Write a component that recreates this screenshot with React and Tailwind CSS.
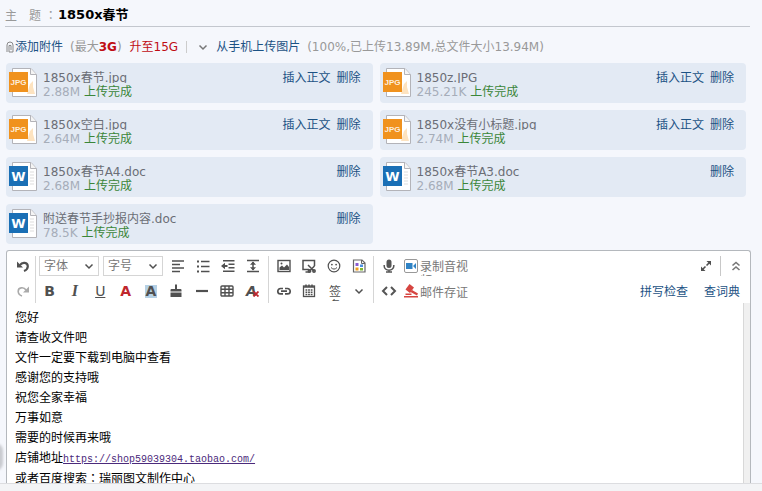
import React from 'react'

const files = [
  { id: 1, name: '1850x春节.jpg', size: '2.88M', type: 'jpg' },
  { id: 2, name: '1850z.JPG', size: '245.21K', type: 'jpg' },
  { id: 3, name: '1850x空白.jpg', size: '2.64M', type: 'jpg' },
  { id: 4, name: '1850x没有小标题.jpg', size: '2.74M', type: 'jpg' },
  { id: 5, name: '1850x春节A4.doc', size: '2.68M', type: 'doc' },
  { id: 6, name: '1850x春节A3.doc', size: '2.68M', type: 'doc' },
  { id: 7, name: '附送春节手抄报内容.doc', size: '78.5K', type: 'doc' },
]

const lines = [
  '您好',
  '请查收文件吧',
  '文件一定要下载到电脑中查看',
  '感谢您的支持哦',
  '祝您全家幸福',
  '万事如意',
  '需要的时候再来哦',
]

const icons = {
  undo: (
    <g>
      <path d="M5 7C7 3.800 13 4 12.800 8.500c-.1 2.300-1.800 3.800-3.800 4.500" fill="none" stroke="currentColor" strokeWidth="2.200" />
      <path d="M2 3.500v6h6z" fill="currentColor" />
    </g>
  ),
  redo: (
    <g>
      <path d="M11 7C9 3.800 3 4 3.200 8.500c.1 2.300 1.800 3.800 3.800 4.500" fill="none" stroke="#aaa" strokeWidth="1.600" />
      <path d="M14 3.500v6H8z" fill="#aaa" />
    </g>
  ),
  align: <path d="M2 3h12M2 6.5h8M2 10h12M2 13.5h8" stroke="currentColor" strokeWidth="1.6" />,
  list: (
    <g>
      <path d="M6 3.5h8.5M6 8.5h8.5M6 13.5h8.5" stroke="currentColor" strokeWidth="1.3" />
      <path d="M2 3.5h2M2 8.5h2M2 13.5h2" stroke="currentColor" strokeWidth="2" />
    </g>
  ),
  indent: (
    <g>
      <path d="M3 2.7h11.5M8.5 6.2h6M8.5 9.7h6M3 13.3h11.5" stroke="currentColor" strokeWidth="1.5" />
      <path d="M1 8l4-3.2V7h2.5v2H5v2.200z" fill="currentColor" />
    </g>
  ),
  lineHeight: (
    <g>
      <path d="M2 2.500h12M2 13.500h12M8 4v8" stroke="currentColor" strokeWidth="1.5" />
      <path d="M8 3.500l3 3.200H5zM8 12.500l3-3.200H5z" fill="currentColor" />
    </g>
  ),
  image: (
    <g>
      <rect x="2" y="2.500" width="12" height="11" fill="none" stroke="currentColor" strokeWidth="1.400" />
      <path d="M3.500 12V9.500l2.500-2 2 2L11 6.500l2 2.500v3z" fill="currentColor" />
      <circle cx="5.500" cy="5.500" r="1" fill="currentColor" />
    </g>
  ),
  capture: (
    <g fill="none" stroke="currentColor" strokeWidth="1.500">
      <path d="M8 11.500H2v-9h11.500V8" />
      <path d="M4.500 14h4M7 7l6.500 6.500M13.500 8L8 13.500" />
      <circle cx="8.500" cy="13" r="1.200" />
      <circle cx="13" cy="13" r="1.200" />
    </g>
  ),
  smile: (
    <g>
      <circle cx="8" cy="8" r="5.800" fill="none" stroke="currentColor" strokeWidth="1.200" />
      <circle cx="5.900" cy="6.600" r=".9" fill="currentColor" />
      <circle cx="10.100" cy="6.600" r=".9" fill="currentColor" />
      <path d="M5 9.500q3 3.200 6 0" fill="none" stroke="currentColor" />
    </g>
  ),
  paper: (
    <g>
      <path d="M2.500 2h8.500l3 3v9H2.500z" fill="#fff" stroke="#666" strokeWidth="1.200" />
      <path d="M10.500 2v3.500H14" fill="none" stroke="#666" />
      <path d="M4.500 5h3v3h-3z" fill="#8a5bd0" />
      <path d="M9 6.500h3V9H9z" fill="#4a90e2" />
      <path d="M4.500 9.500h3v3h-3z" fill="#f0a020" />
      <path d="M9 10h3v2.500H9z" fill="#7cb82f" />
    </g>
  ),
  mic: (
    <g>
      <rect x="5.500" y="1.500" width="5" height="8.500" rx="2.500" fill="#555" />
      <path d="M3.200 7v1a4.800 4.200 0 0 0 9.600 0V7M8 12v2M5 14h6" fill="none" stroke="#555" strokeWidth="1.500" />
    </g>
  ),
  brush: (
    <g fill="currentColor">
      <path d="M7 1.500h2V6h3.500q1 0 1 1v1.500h-11V7q0-1 1-1H7z" />
      <path d="M2.500 9.500h11V14h-11z" />
    </g>
  ),
  dash: <path d="M2 8h12" stroke="currentColor" strokeWidth="2.200" />,
  table: (
    <g fill="none" stroke="currentColor" strokeWidth="1.400">
      <rect x="2" y="3" width="12" height="10" rx="1" />
      <path d="M2 6.300h12M2 9.700h12M6 3v10M10 3v10" />
    </g>
  ),
  link: (
    <g fill="none" stroke="currentColor" strokeWidth="1.700">
      <path d="M7 5.500H4.500a2.700 2.700 0 0 0 0 5.400H7M9 5.500h2.500a2.700 2.700 0 0 1 0 5.400H9M5 8.200h6" />
    </g>
  ),
  calendar: (
    <g>
      <rect x="2.500" y="3" width="11" height="10.500" fill="none" stroke="currentColor" strokeWidth="1.300" />
      <path d="M2.500 4h11M5 1.500v2M8 1.500v2M11 1.500v2" stroke="currentColor" strokeWidth="1.500" />
      <path d="M4.500 7h7M4.500 9.300h7M4.500 11.600h7" stroke="currentColor" strokeWidth="1.500" strokeDasharray="1.800 .8" />
    </g>
  ),
  down: <path d="M4.500 6.500L8 10l3.500-3.500" fill="none" stroke="currentColor" strokeWidth="1.500" />,
  code: <path d="M6 4L2 8l4 4M10 4l4 4-4 4" fill="none" stroke="#555" strokeWidth="2" />,
  video: (
    <g>
      <rect x="1.500" y="1.500" width="13" height="13" rx="1.500" fill="#fff" stroke="#999" />
      <path d="M3 5h6.500v6H3zM10 8l3-3v6z" fill="#2f83c5" />
    </g>
  ),
  gavel: (
    <g fill="#d64541">
      <path d="M6.500 1L11 4.500 7 10 2.500 6.500z" />
      <path d="M9 7l6 3.500-1 2L7.500 9z" />
      <path d="M2.500 10.500h6V12h-6zM1 13h14v1.500H1z" />
    </g>
  ),
  expand: (
    <g fill="currentColor">
      <path d="M8.500 3H13v4.500zM7.500 13H3V8.500z" />
      <path d="M5 11l6-6" stroke="currentColor" strokeWidth="1.600" strokeDasharray="3.500 1.500" />
    </g>
  ),
  collapse: <path d="M4.500 7.500L8 4.500l3.500 3M4.500 12L8 9l3.500 3" fill="none" stroke="#777" strokeWidth="1.600" />,
}

const Icon = ({ name }) => (
  <svg viewBox="0 0 16 16" className="w-4 h-4 shrink-0">{icons[name]}</svg>
)

const Tool = ({ label, icon, children }) => (
  <button type="button" aria-label={label} className="w-[25px] h-5 shrink-0 flex items-center justify-center">
    {icon ? <Icon name={icon} /> : children}
  </button>
)

const FileIcon = ({ type }) => (
  <svg viewBox="0 0 30 32" className="w-[30px] h-8 shrink-0">
    <path d="M4.500 1.500H23l5.500 6v22h-24z" fill="#fff" stroke="#b3b3b8" />
    <path d="M22.500 1.500v6h6" fill="#f4f4f4" stroke="#b3b3b8" />
    {type === 'jpg' ? (
      <path d="M22 17l3-3v6l2 7h-8z" fill="#fde3c0" />
    ) : (
      <path d="M22 11h4M22 14h4M22 17h4M22 20h4M22 23h4" stroke="#ddd" />
    )}
    <rect x="1" y="5" width="19" height="20" fill={type === 'jpg' ? '#f0921e' : '#1a6fb5'} />
    {type === 'jpg' ? (
      <text x="10.500" y="18" textAnchor="middle" fontSize="8" fontWeight="bold" fill="#fdeedd" fontFamily="Liberation Sans, sans-serif">JPG</text>
    ) : (
      <text x="10.500" y="20" textAnchor="middle" fontSize="13" fontWeight="bold" fill="#fff" fontFamily="DejaVu Sans, sans-serif">W</text>
    )}
  </svg>
)

const Attachment = ({ file }) => (
  <li className="flex h-10 pl-0.5 pr-3 pt-1 bg-[#e3eaf4] rounded-sm">
    <FileIcon type={file.type} />
    <div className="flex-1 min-w-0 pl-[5px] pt-[3px]">
      <p className="h-[13px] mb-px leading-4 overflow-hidden whitespace-nowrap text-[#6b6e76]">{file.name}</p>
      <p className="leading-4 whitespace-nowrap text-[#a6adb9]">
        {file.size} <span className="text-[#3b8639]">上传完成</span>
      </p>
    </div>
    <div className="flex gap-1.5 leading-[22px]">
      {file.type === 'jpg' && <a href="#insert">插入正文</a>}
      <a href="#delete">删除</a>
    </div>
  </li>
)

const FontSelect = ({ label }) => (
  <div className="relative w-[60px] h-5 shrink-0">
    <select aria-label={label} className="appearance-none w-full h-full pl-1 border border-[#d5d5d5] bg-white text-[#777]">
      <option>{label}</option>
    </select>
    <span className="absolute right-0.5 top-0.5 pointer-events-none"><Icon name="down" /></span>
  </div>
)

const Colon = () => <span className="font-['Noto_Sans_CJK_TC',sans-serif]">：</span>

const Toolbar = () => (
  <div className="flex pt-[5px] text-[#505050] shrink-0">
    <div className="flex flex-col gap-[5px] pl-[3px] border-r border-[#d5d5d5]">
      <Tool label="撤销" icon="undo" />
      <Tool label="重做" icon="redo" />
    </div>
    <div className="flex flex-col gap-[5px] pl-[3px] pr-[3px] border-r border-[#d5d5d5]">
      <div className="flex">
        <div className="flex gap-1 pr-0.5">
          <FontSelect label="字体" />
          <FontSelect label="字号" />
        </div>
        <Tool label="对齐" icon="align" />
        <Tool label="列表" icon="list" />
        <Tool label="缩进" icon="indent" />
        <Tool label="行距" icon="lineHeight" />
      </div>
      <div className="flex justify-between -ml-0.5 text-sm leading-5">
        <Tool label="加粗"><b>B</b></Tool>
        <Tool label="斜体"><b className="italic text-base font-['Liberation_Serif',serif]">I</b></Tool>
        <Tool label="下划线"><span className="underline">U</span></Tool>
        <Tool label="文字颜色"><b className="text-[#c0272d]">A</b></Tool>
        <Tool label="背景颜色"><b className="leading-[13px] px-px bg-[#b5d0e4]">A</b></Tool>
        <Tool label="格式刷" icon="brush" />
        <Tool label="分隔线" icon="dash" />
        <Tool label="表格" icon="table" />
        <Tool label="清除格式">
          <b className="italic">A</b>
          <svg viewBox="0 0 6 6" className="w-1.5 h-1.5 self-end mb-1 -ml-1"><path d="M.5.5l5 5M5.500.5l-5 5" stroke="#c0272d" strokeWidth="1.800" /></svg>
        </Tool>
      </div>
    </div>
    <div className="flex flex-col gap-[5px] pl-0.5 pr-0.5 border-r border-[#d5d5d5]">
      <div className="flex">
        <Tool label="图片" icon="image" />
        <Tool label="截屏" icon="capture" />
        <Tool label="表情" icon="smile" />
        <Tool label="信纸" icon="paper" />
      </div>
      <div className="flex">
        <Tool label="链接" icon="link" />
        <Tool label="日期" icon="calendar" />
        <button type="button" className="flex items-start w-[25px] h-5 pl-2 pt-1">
          <span className="block w-3 h-4 leading-[14px] break-all overflow-hidden">签名</span>
        </button>
        <Tool label="更多" icon="down" />
      </div>
    </div>
    <div className="flex flex-col gap-[5px] pl-0.5 text-[#777]">
      <div className="flex">
        <Tool label="语音" icon="mic" />
        <button type="button" className="flex items-start h-5 pl-0.5 pt-0.5 gap-px text-left">
          <Icon name="video" />
          <span className="block w-12 h-4 mt-0.5 leading-[14px] break-all overflow-hidden">录制音视频</span>
        </button>
      </div>
      <div className="flex">
        <Tool label="源代码" icon="code" />
        <button type="button" className="flex items-center h-5 pl-0.5 gap-px">
          <Icon name="gavel" />
          <span className="leading-4 mt-1">邮件存证</span>
        </button>
      </div>
    </div>
    <div className="flex flex-col gap-[5px] ml-auto pr-0.5">
      <div className="flex justify-end">
        <Tool label="全屏" icon="expand" />
        <span className="w-px h-5 mx-[2px] bg-[#c8c8c8]" />
        <Tool label="收起" icon="collapse" />
      </div>
      <div className="flex gap-4 pr-2 leading-[22px]">
        <a href="#spell">拼写检查</a>
        <a href="#dict">查词典</a>
      </div>
    </div>
  </div>
)

export default function App() {
  return (
    <div className="h-screen flex flex-col overflow-hidden bg-[#f5f7fc] text-xs text-[#999] font-['DejaVu_Sans','Noto_Sans_CJK_SC',sans-serif] [&_a]:text-[#1c5284] [&_a]:whitespace-nowrap">
      <div className="flex ml-[5px] mr-3 pt-[5px] h-[27px] shrink-0 leading-5 border-b border-[#c3c7ce]">
        <label htmlFor="subject" className="w-[53px] shrink-0 whitespace-nowrap">主　题 <Colon /></label>
        <input id="subject" defaultValue="1850x春节" className="flex-1 h-5 text-[13px] font-bold text-black bg-transparent outline-none" />
      </div>

      <div className="flex items-center h-9 pt-1 pl-1.5 shrink-0 whitespace-nowrap">
        <svg viewBox="0 0 8 12" className="w-2 h-3 mr-px"><path d="M1 11V4a3 3 0 0 1 6 0v7H3V4.500h2V9" fill="none" stroke="#888" /></svg>
        <a href="#attach">添加附件</a>
        <span className="ml-[7px]">(最大<b className="text-[#c00d14]">3G</b>)</span>
        <span className="ml-2 text-[#c00d14]">升至15G</span>
        <span className="w-px h-3 mx-2 bg-[#ccc]" />
        <span className="text-[#777]"><Icon name="down" /></span>
        <a href="#phone" className="ml-[5px]">从手机上传图片</a>
        <span className="ml-[7px]">(100%,已上传13.89M,总文件大小13.94M)</span>
      </div>

      <ul className="grid grid-cols-2 gap-[7px] ml-1.5 mr-4 shrink-0">
        {files.map(f => <Attachment key={f.id} file={f} />)}
      </ul>

      <div className="relative flex-1 min-h-0 mt-[6px] ml-1.5 mr-[11px] flex flex-col bg-white border border-b-0 border-[#b4b8bd] rounded-t-[3px]">
        <Toolbar />
        <div className="flex flex-1 min-h-0">
          <div contentEditable suppressContentEditableWarning className="flex-1 overflow-hidden pl-2 pt-[5px] leading-5 text-black outline-none [&_p]:h-5">
            {lines.map(l => <p key={l}>{l}</p>)}
            <p>
              店铺地址<a href="https://shop59039304.taobao.com/" className="text-[10px] leading-4 underline font-['Liberation_Mono',monospace] text-[#4b2a7b]!">https://shop59039304.taobao.com/</a>
            </p>
            <p>或者百度搜索<Colon />瑞丽图文制作中心</p>
          </div>
          <div className="w-[7px] bg-[#f0f0f0] border-l border-[#d8d8d8]" />
        </div>
        <span className="absolute -left-3 bottom-3 w-2 h-7 rounded-r-full bg-[#c9cbd0] blur-[1px]" />
      </div>
      <div className="h-2 shrink-0 bg-[#f3f4f6] border-t border-[#dcdde0]" />
    </div>
  )
}
